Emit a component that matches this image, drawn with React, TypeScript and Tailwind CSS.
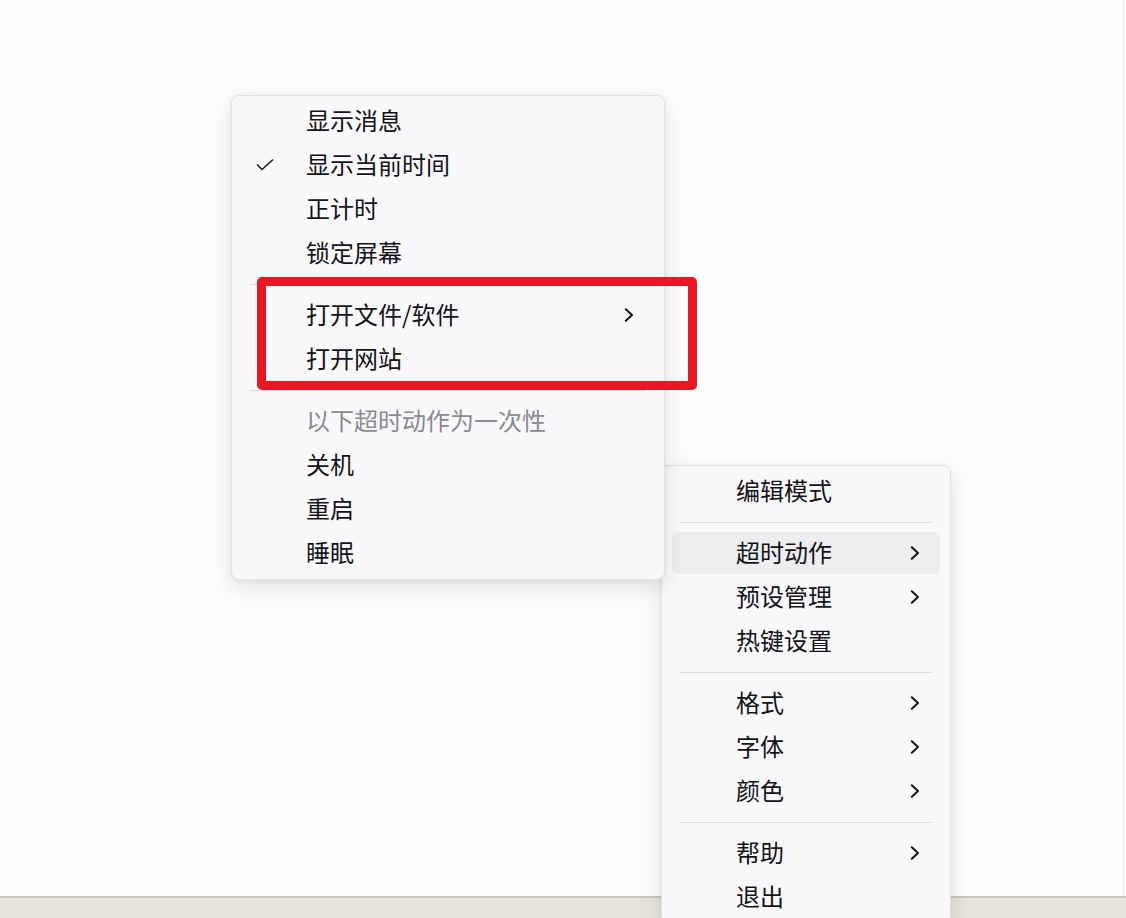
import React from "react";

type Item =
  | { kind: "item"; label: string; check?: boolean; sub?: boolean; muted?: boolean; hover?: boolean }
  | { kind: "sep" };

const Chevron = () => (
  <svg width="10" height="14" viewBox="0 0 10 14" fill="none" className="shrink-0">
    <path d="M1.8 1.2 L8 7 L1.8 12.8" stroke="#141318" strokeWidth="2" strokeLinecap="round" strokeLinejoin="round" />
  </svg>
);

const Check = () => (
  <svg width="18" height="12" viewBox="0 0 18 12" fill="none">
    <path d="M1.5 6 L6 10.5 L16.5 1" stroke="#1b1b1f" strokeWidth="1.6" strokeLinecap="round" strokeLinejoin="round" />
  </svg>
);

function Menu({ items, className }: { items: Item[]; className: string }) {
  return (
    <div
      className={
        "absolute rounded-[8px] border border-[#e2e2e6] bg-[#f9f9fb] pt-[3px] pb-[4px] shadow-[0_8px_24px_rgba(0,0,0,0.10),0_2px_6px_rgba(0,0,0,0.05)] " +
        className
      }
      style={{ fontFamily: '"Noto Sans CJK SC", "Noto Sans", sans-serif' }}
    >
      {items.map((it, i) =>
        it.kind === "sep" ? (
          <div key={i} className="flex h-[18px] items-center px-[18px]">
            <div className="h-px w-full bg-[#dcdce0]" />
          </div>
        ) : (
          <div key={i} className="flex h-[44px] items-center px-[10px]">
            <div
              className={
                "flex h-[42px] w-full items-center rounded-[6px] pr-[20px] " +
                (it.hover ? "bg-[#eeeef1]" : "")
              }
            >
              <div className="flex w-[64px] shrink-0 items-center pl-[14px]">{it.check ? <Check /> : null}</div>
              <span
                className={
                  "flex-1 pb-[3px] text-[24px] leading-none " + (it.muted ? "text-[#8c8990]" : "text-[#141318]")
                }
              >
                {it.label}
              </span>
              {it.sub ? <Chevron /> : null}
            </div>
          </div>
        )
      )}
    </div>
  );
}

const menu1: Item[] = [
  { kind: "item", label: "显示消息" },
  { kind: "item", label: "显示当前时间", check: true },
  { kind: "item", label: "正计时" },
  { kind: "item", label: "锁定屏幕" },
  { kind: "sep" },
  { kind: "item", label: "打开文件/软件", sub: true },
  { kind: "item", label: "打开网站" },
  { kind: "sep" },
  { kind: "item", label: "以下超时动作为一次性", muted: true },
  { kind: "item", label: "关机" },
  { kind: "item", label: "重启" },
  { kind: "item", label: "睡眠" },
];

const menu2: Item[] = [
  { kind: "item", label: "编辑模式" },
  { kind: "sep" },
  { kind: "item", label: "超时动作", sub: true, hover: true },
  { kind: "item", label: "预设管理", sub: true },
  { kind: "item", label: "热键设置" },
  { kind: "sep" },
  { kind: "item", label: "格式", sub: true },
  { kind: "item", label: "字体", sub: true },
  { kind: "item", label: "颜色", sub: true },
  { kind: "sep" },
  { kind: "item", label: "帮助", sub: true },
  { kind: "item", label: "退出" },
];

export default function App() {
  return (
    <div className="relative flex h-[918px] w-[1126px] flex-col overflow-hidden bg-[#fbfcfe]">
      <div className="flex flex-1">
        <div className="flex-1 border-r border-[#eceef2] bg-[#fcfdff]" />
        <div className="w-[2px] bg-[#fbfcfe]" />
      </div>
      <div className="h-[22px] border-t-2 border-[#c8c5bf] bg-[#e8e4dd]" />

      <Menu items={menu2} className="left-[661px] top-[465px] w-[290px]" />
      <Menu items={menu1} className="left-[231px] top-[95px] w-[434px]" />

      <div className="absolute left-[257px] top-[277px] h-[113px] w-[440px] rounded-[5px] border-[9px] border-[#ea1722]" />
    </div>
  );
}
